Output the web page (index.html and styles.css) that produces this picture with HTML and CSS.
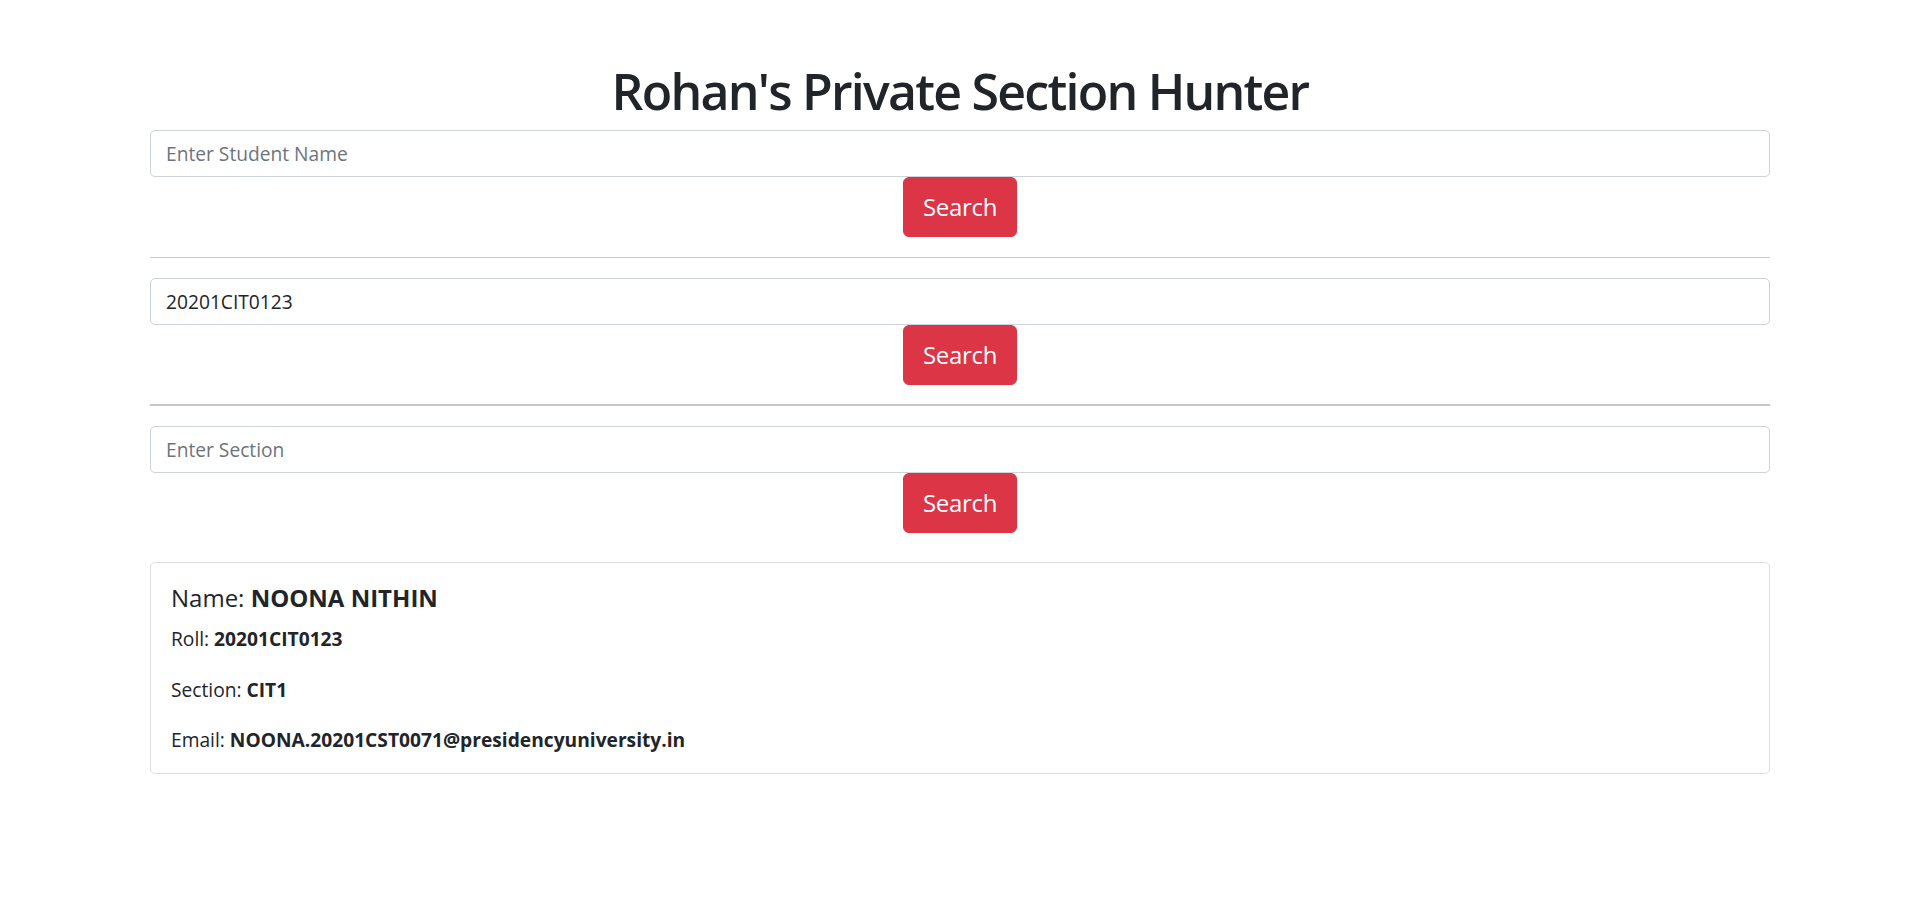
FILE: index.html
```html
<!DOCTYPE html>
<html lang="en">
<head>
<meta charset="utf-8">
<title>Rohan's Private Section Hunter</title>
<link rel="stylesheet" href="styles.css">
</head>
<body>
<div class="container">
  <h1 class="title">Rohan's Private Section Hunter</h1>

  <form class="search-block">
    <input class="field" type="text" placeholder="Enter Student Name">
    <button class="btn-search" type="button">Search</button>
  </form>
  <hr class="divider">

  <form class="search-block">
    <input class="field" type="text" value="20201CIT0123">
    <button class="btn-search" type="button">Search</button>
  </form>
  <hr class="divider divider-thick">

  <form class="search-block">
    <input class="field" type="text" placeholder="Enter Section">
    <button class="btn-search" type="button">Search</button>
  </form>

  <div class="card">
    <h5 class="card-title">Name: <b>NOONA NITHIN</b></h5>
    <p class="card-text">Roll: <b>20201CIT0123</b></p>
    <p class="card-text">Section: <b>CIT1</b></p>
    <p class="card-text">Email: <b>NOONA.20201CST0071@presidencyuniversity.in</b></p>
  </div>
</div>
</body>
</html>
```

FILE: styles.css
```css
* {
  box-sizing: border-box;
}

html, body {
  margin: 0;
  padding: 0;
  background: #ffffff;
}

body {
  font-family: "Open Sans", "Noto Sans", sans-serif;
  font-size: 19.2px;
  color: #212529;
}

.container {
  width: 1620px;
  margin: 0 auto;
  padding-top: 61px;
  display: flex;
  flex-direction: column;
}

.title {
  margin: 0 0 8px;
  font-size: 50px;
  line-height: 61px;
  font-weight: 600;
  letter-spacing: -1.75px;
  text-align: center;
  color: #212529;
}

.search-block {
  display: flex;
  flex-direction: column;
  align-items: center;
  margin: 0;
}

.field {
  width: 100%;
  height: 47px;
  padding: 0 15px;
  border: 1px solid #ced4da;
  border-radius: 5px;
  font-family: inherit;
  font-size: 19.2px;
  color: #212529;
  background: #fff;
  outline: none;
}

.field::placeholder {
  color: #6c757d;
}

.btn-search {
  height: 60px;
  padding: 0 19px;
  border: 1px solid #dc3545;
  border-radius: 6px;
  background: #dc3545;
  color: #ffffff;
  font-family: inherit;
  font-size: 24px;
  line-height: 1;
  letter-spacing: -0.3px;
  cursor: pointer;
}

.divider {
  width: 100%;
  margin: 20px 0;
  border: 0;
  border-top: 1px solid #c9cacc;
  height: 0;
}

.divider-thick {
  margin-top: 19px;
  border-top-width: 2px;
  border-top-color: #c6c6c6;
}

.card {
  margin-top: 29px;
  padding: 19px 20px 18px;
  border: 1px solid #dfdfdf;
  border-radius: 5px;
}

.card-title {
  margin: 0 0 11px;
  font-size: 24px;
  line-height: 31px;
  font-weight: 500;
}

.card-title b {
  font-weight: 700;
}

.card-text {
  margin: 0 0 21px;
  line-height: 29.5px;
}

.card-text:last-child {
  margin-bottom: 0;
}

.card-text b {
  font-weight: 700;
}
```
